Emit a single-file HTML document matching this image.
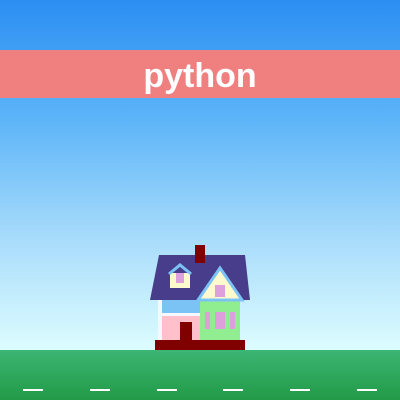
<!DOCTYPE html><html><head><style>body{margin:0}#s{position:relative;width:400px;height:400px;overflow:hidden;background:linear-gradient(#2b8ef2 0%,#5db5f8 30%,#a9dcfb 60%,#dcfcff 87%)}
.b{position:absolute}
</style></head><body><div id="s">
<div class="b" style="left:0;top:50px;width:400px;height:48px;background:#f08080;color:#fff;font:bold 34px 'Liberation Sans',sans-serif;text-align:center;line-height:52px">python</div>
<div class="b" style="left:0;top:350px;width:400px;height:50px;background:linear-gradient(#3bb673,#229a47)"></div>
<div class="b" style="left:23px;top:389px;width:20px;height:2px;background:#fff"></div>
<div class="b" style="left:90px;top:389px;width:20px;height:2px;background:#fff"></div>
<div class="b" style="left:157px;top:389px;width:20px;height:2px;background:#fff"></div>
<div class="b" style="left:223px;top:389px;width:20px;height:2px;background:#fff"></div>
<div class="b" style="left:290px;top:389px;width:20px;height:2px;background:#fff"></div>
<div class="b" style="left:357px;top:389px;width:20px;height:2px;background:#fff"></div>
<svg class="b" style="left:0;top:0" width="400" height="400">
<rect x="158" y="300" width="4" height="40" fill="#f4f8ff"/>
<rect x="162" y="300" width="38" height="13" fill="#7cc3f5"/>
<rect x="162" y="313" width="38" height="3" fill="#f4f8ff"/>
<rect x="162" y="316" width="38" height="24" fill="#ffc0cb"/>
<rect x="180" y="322" width="12" height="18" fill="#800000"/>
<rect x="200" y="300" width="40" height="40" fill="#90ee90"/>
<rect x="205" y="312" width="5" height="17" fill="#dda0dd"/>
<rect x="215" y="312" width="10" height="17" fill="#dda0dd"/>
<rect x="230" y="312" width="5" height="17" fill="#dda0dd"/>
<polygon points="159,255 245,255 250,300 150,300" fill="#483d8b"/>
<rect x="195" y="245" width="10" height="18" fill="#800000"/>
<polygon points="220,268 242,300 198,300" fill="#fffacd" stroke="#7cc3f5" stroke-width="3"/>
<rect x="215" y="285" width="10" height="12" fill="#dda0dd"/>
<rect x="170" y="273" width="20" height="15" fill="#fffacd"/>
<polyline points="169,274 180,265 191,274" fill="none" stroke="#7cc3f5" stroke-width="3"/>
<rect x="176" y="273" width="8" height="10" fill="#dda0dd"/>
<rect x="155" y="340" width="90" height="10" fill="#800000"/>
</svg>
</div></body></html>
